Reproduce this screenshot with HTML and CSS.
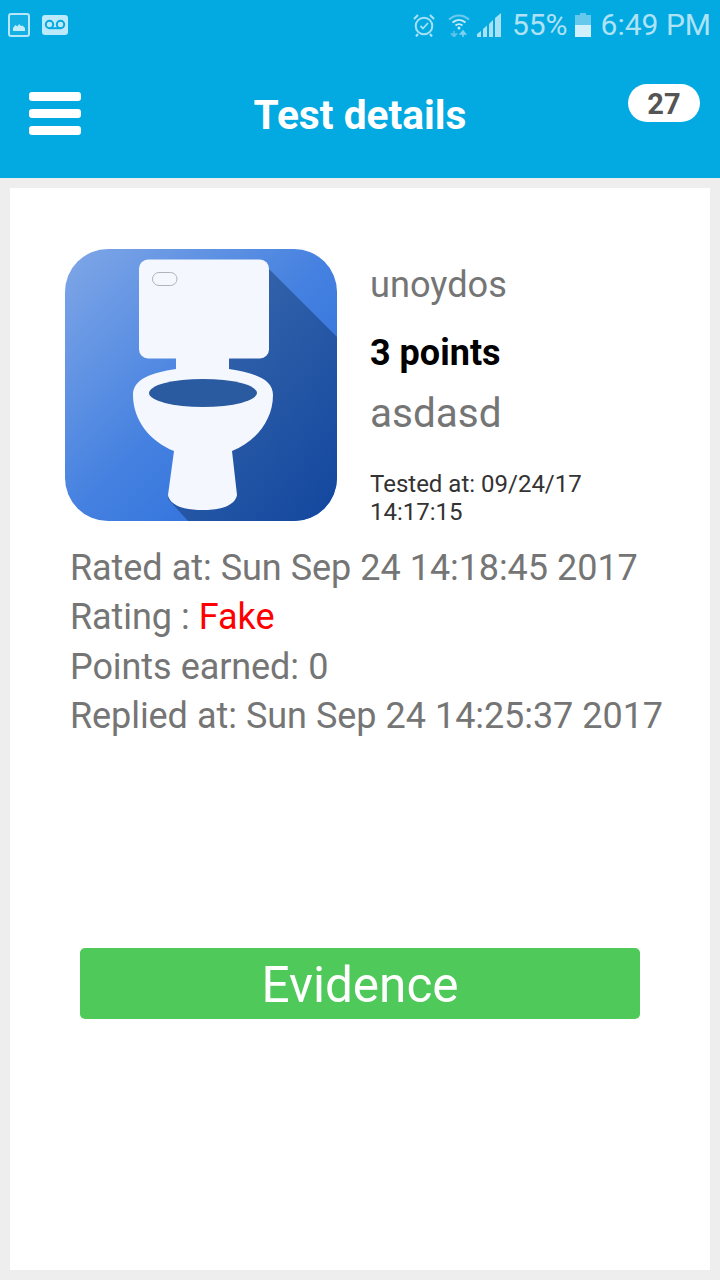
FILE: index.html
```html
<!DOCTYPE html>
<html lang="en">
<head>
<meta charset="utf-8">
<title>Test details</title>
<link rel="stylesheet" href="styles.css">
</head>
<body>
<div class="top">
  <div class="status">
    <svg class="ic-image" viewBox="0 0 22 24"><rect x="1" y="1" width="20" height="22" rx="2" fill="#b5e7f9" fill-opacity=".1" stroke="#b5e7f9" stroke-width="2"/><path d="M5 18v-3l2.500-3 2 1.500 1.500-2.500 2 2 1.500-.5 2.500 2.500v3z" fill="#c4ecfa"/></svg>
    <svg class="ic-voicemail" viewBox="0 0 26 20"><rect width="26" height="20" rx="3" fill="#bdeafa"/><circle cx="7.500" cy="9.500" r="3.700" fill="none" stroke="#03a9e1" stroke-width="2"/><circle cx="18.500" cy="9.500" r="3.700" fill="none" stroke="#03a9e1" stroke-width="2"/><path d="M7.500 13.200h11" stroke="#03a9e1" stroke-width="2"/></svg>
    <span class="status-gap"></span>
    <svg class="ic-alarm" viewBox="0 0 22 24"><circle cx="11" cy="13" r="8.300" fill="none" stroke="#a6e1f6" stroke-width="2"/><path d="M7.500 13l2.500 2.500 5-5.500" fill="none" stroke="#a6e1f6" stroke-width="1.800"/><path d="M1 6l4-4M21 6l-4-4M5 21l-2 2.500M17 21l2 2.500" stroke="#a6e1f6" stroke-width="2.200"/></svg>
    <svg class="ic-wifi" viewBox="0 0 22 24"><path d="M1 6.500C7 1 15 1 21 6.500" fill="none" stroke="#6ccbec" stroke-width="2"/><path d="M4.500 9.500c4-3.500 9-3.500 13 0" fill="none" stroke="#c4ecfa" stroke-width="2"/><path d="M7.500 12.500c2-1.800 5-1.800 7 0" fill="none" stroke="#c4ecfa" stroke-width="2"/><circle cx="11" cy="15" r="1.500" fill="#c4ecfa"/><path d="M6 18v6M3.500 21l2.500 3 2.500-3z" stroke="#5cc4e9" stroke-width="1.500" fill="#5cc4e9"/><path d="M15 24v-6M12.500 21l2.500-3 2.500 3z" stroke="#7dd2ef" stroke-width="1.500" fill="#7dd2ef"/></svg>
    <svg class="ic-signal" viewBox="0 0 24 24"><path d="M0 24v-3l4-3v6zM6 24v-8l4-3.500V24zM12 24V11l4-4v17zM18 24V5l6-5v24z" fill="#a6e1f6"/></svg>
    <span class="pct">55%</span>
    <svg class="ic-battery" viewBox="0 0 16 24"><path d="M5 0h6v2h5v10H0V2h5z" fill="#66c8eb"/><rect y="12" width="16" height="12" fill="#d2f0fb"/></svg>
    <span class="clock">6:49 PM</span>
  </div>
  <header class="bar">
    <div class="burger"><i></i><i></i><i></i></div>
    <h1 class="title">Test details</h1>
    <span class="badge">27</span>
  </header>
</div>
<main class="card">
  <section class="summary">
    <svg class="thumb" viewBox="0 0 272 272">
      <defs>
        <linearGradient id="tile" x1="0" y1="0" x2="1" y2="1">
          <stop offset="0" stop-color="#80a7e7"/>
          <stop offset=".5" stop-color="#4581e0"/>
          <stop offset="1" stop-color="#2368da"/>
        </linearGradient>
        <linearGradient id="fall" x1="0.200" y1="0" x2="1" y2="1">
          <stop offset="0" stop-color="#3a68ac"/>
          <stop offset="1" stop-color="#12479f"/>
        </linearGradient>
        <clipPath id="tile-clip"><rect width="272" height="272" rx="43"/></clipPath>
      </defs>
      <rect width="272" height="272" rx="43" fill="url(#tile)"/>
      <path clip-path="url(#tile-clip)" d="M204 20L272 88V272H123L103 250z" fill="url(#fall)"/>
      <rect x="74" y="10.500" width="130" height="99" rx="9" fill="#f4f7fd"/>
      <rect x="87.500" y="23.500" width="24.500" height="13" rx="6.500" fill="none" stroke="#b0b3b8" stroke-width="1"/>
      <path d="M111 105H164V120C190 124 208 130 208 146C208 172 190 193 167 202L172 246C170 257 155 261 138 261C120 261 105 257 103 246L109 202C86 193 68 172 68 146C68 130 86 124 111 120z" fill="#f4f7fd"/>
      <ellipse cx="138" cy="144" rx="54" ry="14" fill="#2a5aa0"/>
    </svg>
    <div class="info">
      <div class="name">unoydos</div>
      <div class="points">3 points</div>
      <div class="test-name">asdasd</div>
      <div class="tested">Tested at: 09/24/17 14:17:15</div>
    </div>
  </section>
  <section class="details">
    <p>Rated at: Sun Sep 24 14:18:45 2017</p>
    <p>Rating : <span class="fake">Fake</span></p>
    <p>Points earned: 0</p>
    <p>Replied at: Sun Sep 24 14:25:37 2017</p>
  </section>
  <button class="evidence" type="button">Evidence</button>
</main>
</body>
</html>
```

FILE: styles.css
```css
* { box-sizing: border-box; }

html, body { margin: 0; height: 1280px; overflow: hidden; }

body {
  background: #eeeeee;
  font-family: Roboto, "Liberation Sans", sans-serif;
  display: flex;
  flex-direction: column;
}

.top { background: #03a9e1; height: 178px; flex: none; }

/* Status bar */
.status {
  height: 50px;
  display: flex;
  align-items: center;
  padding-left: 8px;
  color: #aee3f6;
}
.status svg { display: block; flex: none; }
.ic-image { width: 22px; height: 24px; }
.ic-voicemail { width: 26px; height: 20px; margin-left: 12px; }
.status-gap { flex: 1; }
.ic-alarm { width: 22px; height: 24px; }
.ic-wifi { width: 22px; height: 24px; margin-left: 13px; }
.ic-signal { width: 24px; height: 24px; margin-left: 7px; }
.pct { font-size: 30px; margin-left: 11px; line-height: 50px; }
.ic-battery { width: 16px; height: 24px; margin-left: 7px; }
.clock { font-size: 30px; margin-left: 10px; margin-right: 9px; line-height: 50px; }

/* App bar */
.bar { position: relative; height: 128px; }
.burger {
  position: absolute;
  left: 29px;
  top: 42px;
  width: 52px;
  display: flex;
  flex-direction: column;
  gap: 8px;
}
.burger i { display: block; height: 9px; background: #fff; border-radius: 3px; }
.title {
  margin: 0;
  padding-top: 41px;
  text-align: center;
  color: #fff;
  font-size: 40.700px;
  line-height: 48px;
  font-weight: 700;
}
.badge {
  position: absolute;
  left: 628px;
  top: 34px;
  width: 72px;
  height: 38px;
  border-radius: 19px;
  background: #fff;
  color: #555;
  font-size: 29px;
  font-weight: 700;
  line-height: 40px;
  text-align: center;
}

/* Card */
.card {
  flex: none;
  height: 1082px;
  margin: 10px 10px 0;
  background: #fff;
  padding: 61px 48px 0 55px;
}
.summary { display: flex; align-items: flex-start; }
.thumb { width: 272px; height: 272px; flex: none; display: block; }
.info { margin-left: 33px; width: 240px; padding-top: 14px; }
.name { font-size: 36.200px; line-height: 44px; color: #757575; }
.points { font-size: 36px; line-height: 44px; margin-top: 24px; font-weight: 700; color: #000; }
.test-name { font-size: 40.500px; line-height: 46px; margin-top: 15px; color: #757575; }
.tested { font-size: 24px; line-height: 28px; margin-top: 34px; color: #333; }

.details { margin-left: 5px; margin-top: 18px; width: 610px; }
.details p { margin: 0; font-size: 36px; letter-spacing: -0.08px; word-spacing: 0.3px; line-height: 49.300px; color: #757575; white-space: nowrap; }
.fake { color: #ff0000; }

.evidence {
  display: block;
  width: 560px;
  height: 71px;
  margin: 207px 0 0 15px;
  border: 0;
  border-radius: 5px;
  background: #4fc95a;
  color: #fff;
  font-family: inherit;
  font-size: 49.500px;
  padding: 3px 0 0;
}
```
